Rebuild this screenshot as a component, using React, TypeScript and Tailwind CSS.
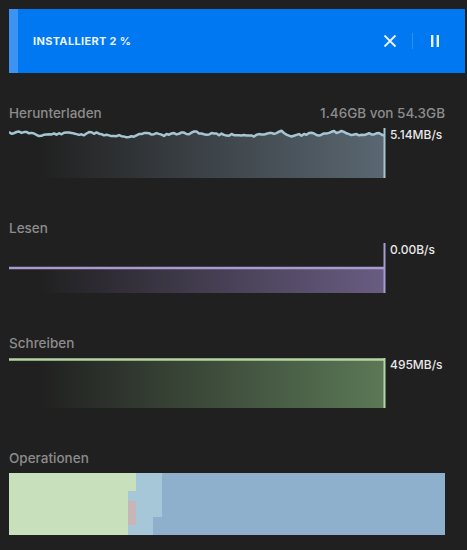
import React from 'react';

const FONT = { fontFamily: 'Inter, "Noto Sans", sans-serif' };

// deterministic jitter for the download line
function wave(width: number): string {
  let seed = 11;
  const rnd = () => {
    seed = (seed * 9301 + 49297) % 233280;
    return seed / 233280;
  };
  const pts: string[] = [];
  let y = 3;
  for (let x = 0; x <= width; x += 2.5) {
    y += (rnd() - 0.5) * 4.2;
    y = Math.max(2, Math.min(10, y + (6 - y) * 0.2));
    pts.push(`${x},${y.toFixed(1)}`);
  }
  return pts.join(' ');
}

type ChartProps = {
  id: string;
  line: string;
  fill: string;
  top: number | 'wave';
  value: string;
};

function Chart({ id, line, fill, top, value }: ChartProps) {
  const w = 375;
  const h = 50;
  const linePts = top === 'wave' ? wave(w) : `0,${top} ${w},${top}`;
  const area = `0,${h} ${linePts} ${w},${h}`;
  return (
    <div className="flex items-start">
      <svg width={w + 2} height={h} className="shrink-0">
        <defs>
          <linearGradient id={id} x1="0" y1="0" x2="1" y2="0">
            <stop offset="0.08" stopColor={fill} stopOpacity="0" />
            <stop offset="1" stopColor={fill} stopOpacity="1" />
          </linearGradient>
        </defs>
        <polygon points={area} fill={`url(#${id})`} />
        <polyline points={linePts} fill="none" stroke={line} strokeWidth="2.5" strokeLinejoin="round" />
        <line x1={w + 0.5} y1="0" x2={w + 0.5} y2={h} stroke={line} strokeWidth="2" />
      </svg>
      <span className="ml-[4px] text-[12px] font-medium leading-[14px] text-[#e8e8e8]">{value}</span>
    </div>
  );
}

function Section({ title, right, children }: { title: string; right?: string; children: React.ReactNode }) {
  return (
    <section className="w-[436px]">
      <div className="flex h-[16px] items-center justify-between text-[13.5px] font-medium text-[#8c8c8c]">
        <span>{title}</span>
        {right && <span>{right}</span>}
      </div>
      <div className="mt-[7px]">{children}</div>
    </section>
  );
}

export default function App() {
  return (
    <div className="h-[550px] w-[467px] overflow-hidden bg-[#202020] pl-[9px] pt-[9px]" style={FONT}>
      <div className="flex h-[64px] w-[456px] bg-[#0078f2]">
        <div className="w-[9px] bg-[#3c93f3]" />
        <div className="flex flex-1 items-center pl-[15px] pr-[25px]">
          <span className="text-[11px] font-bold tracking-[0.03em] text-[#eaf3ff]">INSTALLIERT 2 %</span>
          <div className="ml-auto flex items-center">
            <svg width="14" height="14" viewBox="0 0 14 14" className="mr-[15px]">
              <path d="M1.5 1.5 L12.5 12.5 M12.5 1.5 L1.5 12.5" stroke="#eaf3ff" strokeWidth="1.8" />
            </svg>
            <div className="h-[16px] w-px bg-[#2f8ef5]" />
            <svg width="10" height="12" viewBox="0 0 10 12" className="ml-[17px]">
              <rect x="1" y="0" width="2.4" height="12" fill="#eaf3ff" />
              <rect x="6.6" y="0" width="2.4" height="12" fill="#eaf3ff" />
            </svg>
          </div>
        </div>
      </div>

      <div className="mt-[32px] flex flex-col gap-[42px]">
        <Section title="Herunterladen" right="1.46GB von 54.3GB">
          <Chart id="dl" line="#a6c5d3" fill="#5a6771" top="wave" value="5.14MB/s" />
        </Section>
        <Section title="Lesen">
          <Chart id="rd" line="#a99ad0" fill="#695c82" top={25} value="0.00B/s" />
        </Section>
        <Section title="Schreiben">
          <Chart id="wr" line="#b4d6a3" fill="#5b7856" top={1.5} value="495MB/s" />
        </Section>
        <Section title="Operationen">
          <svg width="436" height="62">
            <rect x="0" y="0" width="436" height="62" fill="#8fb0cc" />
            <polygon points="0,0 127,0 127,18 119,18 119,62 0,62" fill="#c8e0bb" />
            <polygon points="127,0 153,0 153,44 144,44 144,62 119,62 119,18 127,18" fill="#a6c7d8" />
            <rect x="119" y="28" width="8" height="24" fill="#c8b5b8" />
          </svg>
        </Section>
      </div>
    </div>
  );
}
